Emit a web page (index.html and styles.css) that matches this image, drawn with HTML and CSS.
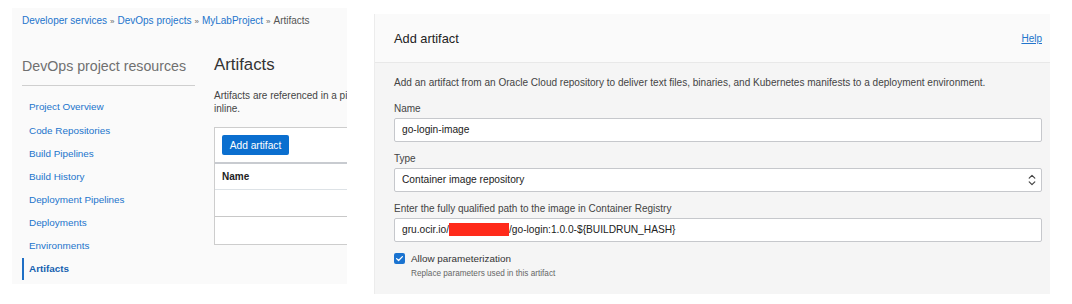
FILE: index.html
```html
<!DOCTYPE html>
<html lang="en">
<head>
<meta charset="utf-8">
<title>Add artifact</title>
<link rel="stylesheet" href="styles.css">
</head>
<body>
<div class="page">
  <section class="console">
    <nav class="crumbs">
      <a href="#">Developer services</a><span class="sep">»</span><a href="#">DevOps projects</a><span class="sep">»</span><a href="#">MyLabProject</a><span class="sep">»</span><span class="current">Artifacts</span>
    </nav>
    <div class="columns">
      <aside class="sidebar">
        <h2 class="side-title">DevOps project resources</h2>
        <ul class="side-nav">
          <li><a href="#">Project Overview</a></li>
          <li><a href="#">Code Repositories</a></li>
          <li><a href="#">Build Pipelines</a></li>
          <li><a href="#">Build History</a></li>
          <li><a href="#">Deployment Pipelines</a></li>
          <li><a href="#">Deployments</a></li>
          <li><a href="#">Environments</a></li>
          <li class="active"><a href="#">Artifacts</a></li>
        </ul>
      </aside>
      <main class="content">
        <h1 class="content-title">Artifacts</h1>
        <p class="content-desc">Artifacts are referenced in a pipeline stage, either as a pointer to a repository or defined<br>inline.</p>
        <div class="table">
          <div class="table-toolbar"><button class="btn-primary">Add artifact</button></div>
          <div class="table-head">Name</div>
          <div class="table-row"></div>
          <div class="table-row"></div>
        </div>
      </main>
    </div>
  </section>

  <section class="panel">
    <header class="panel-head">
      <h2 class="panel-title">Add artifact</h2>
      <a class="help" href="#">Help</a>
    </header>
    <div class="panel-body">
      <p class="panel-desc">Add an artifact from an Oracle Cloud repository to deliver text files, binaries, and Kubernetes manifests to a deployment environment.</p>
      <div class="field">
        <label class="field-label">Name</label>
        <div class="control">go-login-image</div>
      </div>
      <div class="field">
        <label class="field-label">Type</label>
        <div class="control select">
          <span>Container image repository</span>
          <svg class="chev" width="8" height="12" viewBox="0 0 8 12"><path d="M1.2 4.2 4 1.4 6.8 4.2M1.2 7.8 4 10.6 6.8 7.8" fill="none" stroke="#444" stroke-width="1.2" stroke-linecap="round" stroke-linejoin="round"/></svg>
        </div>
      </div>
      <div class="field">
        <label class="field-label">Enter the fully qualified path to the image in Container Registry</label>
        <div class="control">gru.ocir.io/<span class="redact"></span>/go-login:1.0.0-${BUILDRUN_HASH}</div>
      </div>
      <div class="check-row">
        <span class="checkbox"><svg width="11" height="11" viewBox="0 0 11 11"><path d="M2.6 5.6 4.6 7.5 8.4 3.6" fill="none" stroke="#fff" stroke-width="1.3" stroke-linecap="round" stroke-linejoin="round"/></svg></span>
        <span class="check-label">Allow parameterization</span>
      </div>
      <p class="hint">Replace parameters used in this artifact</p>
    </div>
  </section>
</div>
</body>
</html>
```
FILE: styles.css
```css
* { box-sizing: border-box; }
html, body { margin: 0; padding: 0; background: #fff; }
body {
  font-family: "Liberation Sans", Arial, sans-serif;
  color: #333;
  width: 1072px;
  height: 304px;
  overflow: hidden;
}
a { text-decoration: none; color: #2274cc; }
.page { display: flex; align-items: flex-start; }

/* Left console */
.console {
  margin: 8px 0 0 12px;
  width: 335px;
  height: 276px;
  background: #fafafa;
  padding: 6px 0 0 10px;
  overflow: hidden;
}
.crumbs {
  font-size: 10px;
  line-height: 14px;
  white-space: nowrap;
  color: #555;
}
.crumbs .sep { margin: 0 3px; color: #666; font-size: 8px; }
.columns { display: flex; margin-top: 25px; }
.sidebar { width: 173px; flex: none; padding-top: 2px; }
.side-title {
  margin: 0;
  font-size: 14.2px;
  font-weight: normal;
  line-height: 20px;
  color: #707070;
  padding-bottom: 9px;
  border-bottom: 1px solid #cfcfcf;
  white-space: nowrap;
}
.side-nav { list-style: none; margin: 9.4px 0 0; padding: 0; }
.side-nav li {
  height: 23.15px;
  line-height: 23.15px;
  font-size: 9.9px;
  padding-left: 7px;
  white-space: nowrap;
}
.side-nav li.active {
  height: 22px;
  line-height: 22px;
  margin-top: 0.6px;
  border-left: 2px solid #1f6fc5;
  padding-left: 5px;
  font-weight: bold;
}
.side-nav li.active a { color: #1560b0; }

.content { margin-left: 19px; width: 600px; flex: none; }
.content-title {
  margin: 0;
  font-size: 16.8px;
  font-weight: normal;
  line-height: 22px;
  color: #333;
}
.content-desc {
  margin: 12.5px 0 0;
  font-size: 10px;
  line-height: 13px;
  color: #444;
}
.table {
  margin-top: 12.5px;
  border: 1px solid #cdcdcd;
  background: #fff;
}
.table-toolbar { padding: 7px 6px 7px 7px; border-bottom: 2px solid #c8cbd0; }
.btn-primary {
  display: block;
  width: 67px;
  height: 20px;
  padding: 0;
  border: none;
  border-radius: 2px;
  background: #0b6fcf;
  color: #fff;
  font-family: inherit;
  font-size: 10.2px;
}
.table-head {
  height: 26px;
  line-height: 26px;
  padding-left: 7px;
  font-size: 10px;
  font-weight: bold;
  color: #222;
  border-bottom: 1px solid #dde2e6;
}
.table-row { height: 27px; border-bottom: 1px solid #c8c8c8; }
.table-row:last-child { border-bottom: none; }

/* Right panel */
.panel {
  margin: 14px 0 0 27px;
  width: 676px;
  height: 280px;
  background: #f5f5f5;
  border-left: 1px solid #ececec;
}
.panel-head {
  height: 49px;
  background: #fafafa;
  border-bottom: 1px solid #e8e8e8;
  display: flex;
  align-items: center;
  justify-content: space-between;
  padding: 0 8px 0 19px;
}
.panel-title { margin: 0; font-size: 12.8px; font-weight: normal; color: #222; }
.help { font-size: 10px; text-decoration: underline; color: #2274cc; }
.panel-body { padding: 13px 8px 0 19px; }
.panel-desc {
  margin: 0 0 11.5px;
  font-size: 10.05px;
  line-height: 14px;
  color: #444;
  white-space: nowrap;
}
.field { margin-bottom: 10px; }
.field-label {
  display: block;
  font-size: 10px;
  line-height: 13px;
  color: #444;
  margin-bottom: 3px;
}
.control {
  height: 24px;
  background: #fff;
  border: 1px solid #c6c8cc;
  border-radius: 2px;
  padding: 0 7px;
  display: flex;
  align-items: center;
  font-size: 10.2px;
  color: #222;
  white-space: nowrap;
}
.select { justify-content: space-between; padding-right: 5px; }
.chev { display: block; }
.redact {
  display: inline-block;
  width: 60px;
  height: 13px;
  background: #ff2a1a;
}
.check-row {
  display: flex;
  align-items: center;
  margin-top: 9.5px;
  height: 13px;
}
.checkbox {
  width: 11px;
  height: 11px;
  border-radius: 2px;
  background: #1a73d0;
  display: flex;
}
.check-label {
  margin-left: 6px;
  font-size: 9.9px;
  color: #333;
}
.hint {
  margin: 3px 0 0 17px;
  font-size: 8.2px;
  line-height: 11px;
  color: #666;
}
```
